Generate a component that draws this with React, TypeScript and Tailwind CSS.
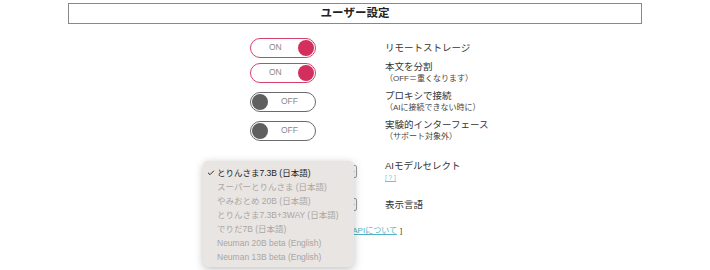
import { Check } from 'lucide-react';

const models = [
  'とりんさま7.3B (日本語)',
  'スーパーとりんさま (日本語)',
  'やみおとめ 20B (日本語)',
  'とりんさま7.3B+3WAY (日本語)',
  'でりだ7B (日本語)',
  'Neuman 20B beta (English)',
  'Neuman 13B beta (English)',
];

function Toggle({ on }: { on: boolean }) {
  if (on) {
    return (
      <div className="flex h-[20px] w-[66px] items-center rounded-full border-[1.5px] border-[#d3416c] bg-white pl-[18px] pr-[1px]">
        <span className="flex-1 text-[8.5px] text-[#888]">ON</span>
        <span className="h-[16px] w-[16px] rounded-full bg-[#d22f5e]" />
      </div>
    );
  }
  return (
    <div className="flex h-[20px] w-[66px] items-center rounded-full border-[1.5px] border-[#6a6a6a] bg-white pl-[1px] pr-[17px]">
      <span className="h-[16px] w-[16px] rounded-full bg-[#5f5f5f]" />
      <span className="flex-1 text-right text-[8.5px] text-[#888]">OFF</span>
    </div>
  );
}

// native select, mostly covered by the open menu
function FakeSelect() {
  return (
    <div className="flex h-[13px] w-[152px] shrink-0 items-center justify-end rounded-[2px] border border-[#9a9a9a] bg-white pr-[2px]">
      <span className="h-[3px] w-[3px] rotate-45 border-b border-r border-[#666]" />
    </div>
  );
}

function Row({
  className,
  control,
  label,
  sub,
  end,
}: {
  className?: string;
  control: React.ReactNode;
  label: string;
  sub?: React.ReactNode;
  end?: boolean;
}) {
  return (
    <div className={`flex h-[25px] items-center ${className ?? ''}`}>
      <div className={`flex w-[170px] shrink-0 ${end ? 'justify-end pr-[11px]' : 'justify-center'}`}>{control}</div>
      <div className="ml-[17px] flex flex-col">
        <span className="text-[9.5px] leading-[13px] text-[#333]">{label}</span>
        {sub && <span className="text-[8px] leading-[12px] text-[#444]">{sub}</span>}
      </div>
    </div>
  );
}

export default function App() {
  return (
    <div className="relative h-[270px] w-[710px] bg-white font-['Liberation_Sans','Noto_Sans_CJK_JP',sans-serif]">
      <div className="px-[68px] pt-[3px]">
        <div className="flex h-[21px] items-center justify-center border border-[#888] text-[11.5px] font-bold text-[#222]">
          ユーザー設定
        </div>
      </div>

      <div className="pl-[198px]">
        <Row className="mt-[11px]" control={<Toggle on />} label="リモートストレージ" />
        <Row control={<Toggle on />} label="本文を分割" sub="（OFF＝重くなります）" />
        <Row className="mt-[4px]" control={<Toggle on={false} />} label="プロキシで接続" sub="（AIに接続できない時に）" />
        <Row className="mt-[4px]" control={<Toggle on={false} />} label="実験的インターフェース" sub="（サポート対象外）" />
        <Row
          className="mt-[16px]"
          end
          control={<FakeSelect />}
          label="AIモデルセレクト"
          sub={<span className="text-[6.5px] text-[#6cc3cf] underline">[ ? ]</span>}
        />
        <Row className="mt-[8px]" end control={<FakeSelect />} label="表示言語" />
      </div>

      <div className="mt-[7px] flex h-[14px] items-center pl-[346px] text-[8px] text-[#444]">
        <span>[</span>
        <span className="ml-[4px] text-[#4fb3c2] underline">APIについて</span>
        <span className="ml-[3px]">]</span>
      </div>

      {/* open select menu */}
      <div className="absolute left-[203px] top-[161px] w-[151px] rounded-[5px] bg-[#e9e5e3] pb-[3px] pt-[5px] shadow-[0_2px_8px_rgba(0,0,0,0.25)]">
        {models.map((m, i) => (
          <div key={m} className="flex h-[14px] items-center text-[8.5px]">
            <span className="flex w-[14px] justify-end pr-[2px]">
              {i === 0 && <Check className="h-[8px] w-[8px] text-[#222]" strokeWidth={3} />}
            </span>
            <span className={i === 0 ? 'text-[#222]' : 'text-[#aaa5a2]'}>{m}</span>
          </div>
        ))}
      </div>
    </div>
  );
}
